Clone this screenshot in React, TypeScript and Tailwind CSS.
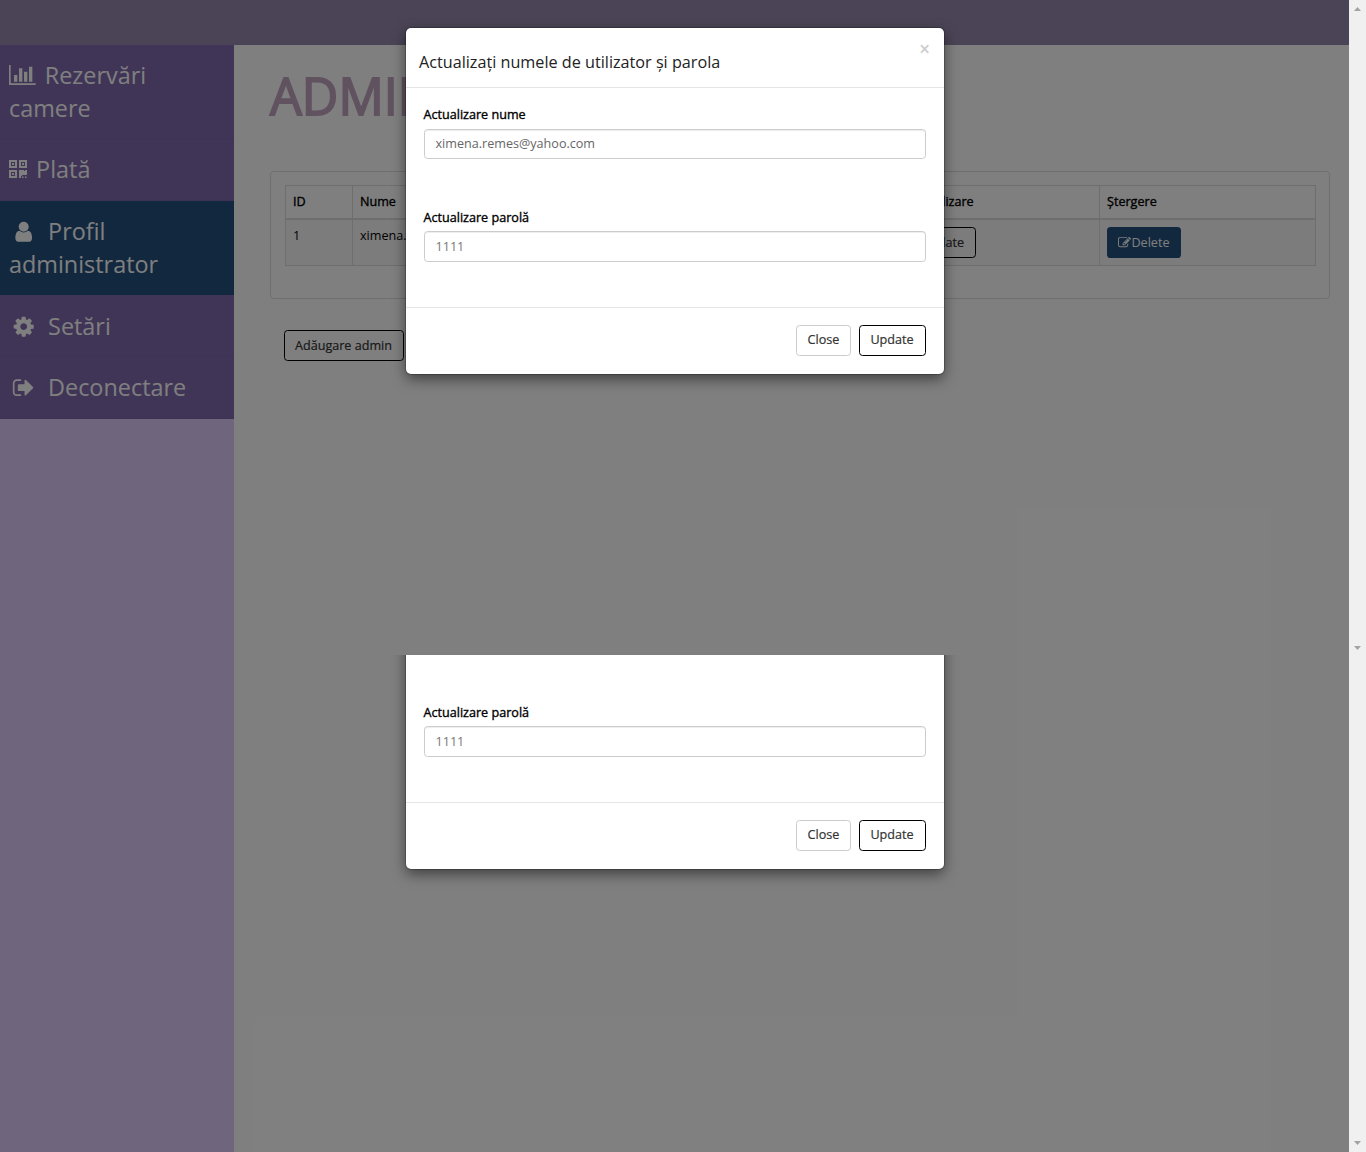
import type { ReactNode } from "react";

type IconProps = { d: string; box: string; className: string };

function Icon({ d, box, className }: IconProps) {
  return (
    <svg viewBox={box} fill="currentColor" className={className} aria-hidden="true">
      <path d={d} />
    </svg>
  );
}

const CHART =
  "M640 768v512h-256v-512h256zm384-512v1024h-256v-1024h256zm1024 1152v128h-2048v-1536h128v1408h1920zm-640-896v768h-256v-768h256zm384-384v1152h-256v-1152h256z";
const QR =
  "M0 0h8v8h-8zM2 2v4h4v-4zM3 3h2v2h-2zM10 0h8v8h-8zM12 2v4h4v-4zM13 3h2v2h-2zM0 10h8v8h-8zM2 12v4h4v-4zM3 13h2v2h-2zM10 10h5v1h1v-1h2v5h-5v1h-1v2h-2zM13 16.5h1.5v1.5h-1.5zM16 16.5h1.5v1.5h-1.5z";
const USER =
  "M1536 1399q0 109-62.5 187t-150.5 78h-854q-88 0-150.5-78t-62.5-187q0-85 8.5-160.5t31.5-152 58.5-131 94-89 134.5-34.5q131 128 313 128t313-128q76 0 134.5 34.5t94 89 58.5 131 31.5 152 8.5 160.5zm-256-887q0 159-112.5 271.5t-271.5 112.5-271.5-112.5-112.5-271.5 112.5-271.5 271.5-112.5 271.5 112.5 112.5 271.5z";
const COG =
  "M1152 896q0-106-75-181t-181-75-181 75-75 181 75 181 181 75 181-75 75-181zm512-109v222q0 12-8 23t-20 13l-185 28q-19 54-39 91 35 50 107 138 10 12 10 25t-9 23q-27 37-99 108t-94 71q-12 0-26-9l-138-108q-44 23-91 38-16 136-29 186-7 28-36 28h-222q-14 0-24.5-8.5t-11.5-21.5l-28-184q-49-16-90-37l-141 107q-10 9-25 9-14 0-25-11-126-114-165-168-7-10-7-23 0-12 8-23 15-21 51-66.5t54-70.5q-27-50-41-99l-183-27q-13-2-21-12.5t-8-23.5v-222q0-12 8-23t19-13l186-28q14-46 39-92-40-57-107-138-10-12-10-24 0-10 9-23 26-36 98.5-107.5t94.5-71.5q13 0 26 10l138 107q44-23 91-38 16-136 29-186 7-28 36-28h222q14 0 24.5 8.5t11.5 21.5l28 184q49 16 90 37l142-107q9-9 24-9 13 0 25 10 129 119 165 170 7 8 7 22 0 12-8 23-15 21-51 66.5t-54 70.5q26 50 41 98l183 28q13 2 21 12.5t8 23.5z";
const SIGN_OUT =
  "M704 1440q0 4 1 20t.5 26.5-3 23.5-10 19.5-20.5 6.5h-320q-119 0-203.5-84.5t-84.5-203.5v-704q0-119 84.5-203.5t203.5-84.5h320q13 0 22.5 9.5t9.5 22.5q0 4 1 20t.5 26.5-3 23.5-10 19.5-20.5 6.5h-320q-66 0-113 47t-47 113v704q0 66 47 113t113 47h312l11.5 1 11.5 3 8 5.5 7 9 2 13.5zm928-544q0 26-19 45l-544 544q-19 19-45 19t-45-19-19-45v-288h-448q-26 0-45-19t-19-45v-384q0-26 19-45t45-19h448v-288q0-26 19-45t45-19 45 19l544 544q19 19 19 45z";
const EDIT =
  "M888 1184l116-116-152-152-116 116v56h96v96h56zm440-720q-16-16-33 1l-350 350q-17 17-1 33t33-1l350-350q17-17 1-33zm80 594v190q0 119-84.5 203.5t-203.5 84.5h-832q-119 0-203.5-84.5t-84.5-203.5v-832q0-119 84.5-203.5t203.5-84.5h832q63 0 117 25 15 7 18 23 3 17-9 29l-49 49q-14 14-32 8-23-6-45-6h-832q-66 0-113 47t-47 113v832q0 66 47 113t113 47h832q66 0 113-47t47-113v-126q0-13 9-22l64-64q15-15 35-7t20 29zm-96-738l288 288-672 672h-288v-288zm444 132l-92 92-288-288 92-92q28-28 68-28t68 28l152 152q28 28 28 68t-28 68z";

function NavItem({ icon, children, className }: { icon: ReactNode; children: ReactNode; className: string }) {
  return (
    <a className={`block border-b pr-2 pl-[9px] ${className}`}>
      <span className="mr-[3px]">{icon}</span> {children}
    </a>
  );
}

function Button({ children, className }: { children: ReactNode; className: string }) {
  return (
    <button
      className={`flex h-[31px] items-center justify-center rounded-[3.6px] border text-[#333] [-webkit-text-stroke:0.2px_#333] ${className}`}
    >
      {children}
    </button>
  );
}

function Label({ children }: { children: ReactNode }) {
  return (
    <div className="-ml-[0.5px] h-[18px] leading-[18px] text-black [-webkit-text-stroke:0.35px_#000]">{children}</div>
  );
}

function Modal() {
  const input =
    "flex items-center rounded-[3.6px] border border-[#ccc] px-[10.5px] shadow-[inset_0_1px_1px_rgba(0,0,0,0.075)]";
  return (
    <div className="h-[346px] w-[538px] rounded-[5px] bg-white shadow-[0_0_0_1px_rgba(0,0,0,0.2),0_5px_14px_rgba(0,0,0,0.5)]">
      <div className="flex h-[60px] justify-between border-b border-[#e5e5e5] pl-[13px]">
        <h4 className="pt-[23px] text-[16.2px] leading-[22px] text-[#222]">Actualizați numele de utilizator și parola</h4>
        <span className="mt-[12px] mr-[14px] text-[18.9px] leading-[19px] font-semibold text-[#ccc]">×</span>
      </div>
      <div className="h-[219px] px-[18px] pt-[18px]">
        <div className="h-[103px]">
          <Label>Actualizare nume</Label>
          <div className={`mt-[5px] h-[30px] text-[#666] ${input}`}>ximena.remes@yahoo.com</div>
        </div>
        <Label>Actualizare parolă</Label>
        <div className={`mt-[4px] h-[31px] text-[#777] ${input}`}>1111</div>
      </div>
      <div className="flex h-[67px] justify-end gap-2 border-t border-[#e5e5e5] pt-[17px] pr-[18px]">
        <Button className="w-[55px] border-[#ccc] pb-px">Close</Button>
        <Button className="w-[67px] border-black pr-px pb-px">Update</Button>
      </div>
    </div>
  );
}

function ScrollTrack({ className }: { className: string }) {
  return (
    <div className={className}>
      <svg viewBox="0 0 7 4" className="h-1 w-[7px] fill-[#a3a3a3]"><path d="M0 4L3.5 0L7 4z" /></svg>
      <svg viewBox="0 0 7 4" className="h-1 w-[7px] fill-[#a3a3a3]"><path d="M0 0h7L3.5 4z" /></svg>
    </div>
  );
}

export default function App() {
  const th =
    "border border-[#ddd] border-b-2 px-[7px] py-0 text-left font-normal [-webkit-text-stroke:0.35px_#000]";
  const td = "border border-[#ddd] bg-[#f9f9f9] px-[7px] pt-[7px] align-top";
  const item = "border-[#7c66a6] bg-[#806aae]";
  return (
    <div className="relative flex h-[1152px] w-[1366px] overflow-hidden font-['Open_Sans',sans-serif] text-[12.6px] leading-[18px] text-black">
      <div className="relative flex h-full w-[1349px] flex-col bg-white">
        <header className="h-[45px] shrink-0 bg-[#9488ac]" />
        <div className="flex flex-1">
          <nav className="w-[234px] shrink-0 bg-[#decdfa] text-[23.4px] leading-[33.4px] text-white">
            <NavItem
              className={`h-[94px] pt-[13.7px] ${item}`}
              icon={<Icon d={CHART} box="0 0 2048 1536" className="inline-block h-[20px] w-[26.7px] align-[-1.5px]" />}
            >
              Rezervări<br />camere
            </NavItem>
            <NavItem
              className={`h-[62px] pt-[14.1px] ${item}`}
              icon={<Icon d={QR} box="0 0 18 18" className="inline-block size-[18px] align-[0px]" />}
            >
              Plată
            </NavItem>
            <NavItem
              className="h-[94px] border-[#24507e] bg-[#24507e] pt-[13.7px]"
              icon={<Icon d={USER} box="0 0 1792 1792" className="mx-[3.3px] inline-block size-[23.4px] align-[-3.3px]" />}
            >
              Profil<br />administrator
            </NavItem>
            <NavItem
              className={`h-[62px] pt-[14.6px] ${item}`}
              icon={<Icon d={COG} box="0 0 1792 1792" className="mx-[3.3px] inline-block size-[23.4px] align-[-3.3px]" />}
            >
              Setări
            </NavItem>
            <NavItem
              className={`h-[62px] pt-[14.1px] ${item}`}
              icon={<Icon d={SIGN_OUT} box="0 0 1664 1792" className="mr-[5px] ml-[3.3px] inline-block h-[23.4px] w-[21.7px] align-[-3.3px]" />}
            >
              Deconectare
            </NavItem>
          </nav>
          <main className="min-w-0 flex-1 pt-[16px] pr-[19px] pl-[36px]">
            <h1 className="h-[110px] text-[50.4px] leading-[69px] font-normal text-[#c2a4c0] [-webkit-text-stroke:1.8px_#c2a4c0]">
              ADMINISTRATOR
            </h1>
            <section className="h-[128px] rounded-[3.6px] border border-[#ddd] px-[14px] pt-[13px]">
              <table className="w-[1030px] table-fixed border-collapse">
                <colgroup>
                  <col className="w-[67px]" />
                  <col className="w-[340px]" />
                  <col className="w-[209px]" />
                  <col className="w-[198px]" />
                  <col className="w-[216px]" />
                </colgroup>
                <thead>
                  <tr className="h-[33px]">
                    <th className={th}>ID</th>
                    <th className={th}>Nume</th>
                    <th className={th}>Parolă</th>
                    <th className={th}>Actualizare</th>
                    <th className={th}>Ștergere</th>
                  </tr>
                </thead>
                <tbody>
                  <tr className="h-[47px]">
                    <td className={td}>1</td>
                    <td className={td}>ximena.remes@yahoo.com</td>
                    <td className={td}>1111</td>
                    <td className={td}>
                      <Button className="w-[67px] border-black pt-px">Update</Button>
                    </td>
                    <td className={td}>
                      <button className="flex h-[31px] w-[74px] items-center justify-center rounded-[3.6px] bg-[#24507e] pt-px text-white">
                        <Icon d={EDIT} box="0 0 1792 1792" className="size-[13px]" />Delete
                      </button>
                    </td>
                  </tr>
                </tbody>
              </table>
            </section>
            <div className="mt-[31px] ml-[14px]">
              <Button className="w-[120px] border-black pt-px pr-px">Adăugare admin</Button>
            </div>
          </main>
        </div>
        <div className="absolute inset-0 bg-black/50" />
        <div className="absolute top-[28px] left-[406px]"><Modal /></div>
        <div className="absolute top-[655px] left-[376px] flex h-[250px] w-[598px] items-end overflow-hidden px-[30px] pb-[36px]">
          <Modal />
        </div>
      </div>
      <aside className="flex w-[17px] flex-col bg-[#f0f0f0]">
        <ScrollTrack className="flex h-[655px] flex-col items-center justify-between pt-[7px] pb-[5px]" />
        <ScrollTrack className="flex h-[497px] flex-col items-center justify-between pt-[7px] pb-[7px] [&>svg:first-child]:invisible" />
      </aside>
    </div>
  );
}
